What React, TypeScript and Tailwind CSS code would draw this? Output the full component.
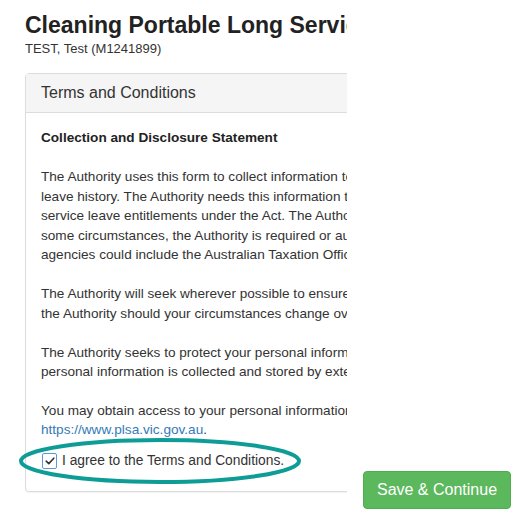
const paragraphs: string[][] = [
  [
    'The Authority uses this form to collect information to determine your long',
    'leave history. The Authority needs this information to calculate your long',
    'service leave entitlements under the Act. The Authority may disclose this information. In',
    'some circumstances, the Authority is required or authorised by law to disclose',
    'agencies could include the Australian Taxation Office.',
  ],
  [
    'The Authority will seek wherever possible to ensure that your information is up to date. Please contact',
    'the Authority should your circumstances change over time.',
  ],
  [
    'The Authority seeks to protect your personal information from misuse. Some',
    'personal information is collected and stored by external service providers.',
  ],
];

const CheckIcon = () => (
  <svg width="10" height="8" viewBox="0 0 10 8" fill="none">
    <path d="M1.2 4.2 L3.8 6.6 L8.8 1.2" stroke="#333" strokeWidth="1.6" strokeLinecap="round" strokeLinejoin="round" />
  </svg>
);

export default function App() {
  return (
    <div className="relative h-[526px] w-[527px] overflow-hidden bg-white font-['Liberation_Sans',Arial,sans-serif] text-[#333]">
      <div className="flex h-full">
        {/* Clipped page area */}
        <div className="h-full w-[347px] shrink-0 overflow-hidden pl-[25px] pt-[13px]">
          <div className="w-[700px]">
            <h1 className="text-[23px] font-bold leading-[25px] text-[#222]">
              Cleaning Portable Long Service Leave Registration
            </h1>
            <div className="mt-px text-[13px] leading-[20px] text-[#333]">TEST, Test (M1241899)</div>

            <div className="mt-[14px] rounded-[4px] border border-[#ddd] bg-white shadow-[0_1px_1px_rgba(0,0,0,0.05)]">
              <div className="flex h-[39px] items-center border-b border-[#ddd] bg-[#f5f5f5] px-[15px] text-[16px] text-[#333]">
                Terms and Conditions
              </div>
              <div className="px-[15px] pb-[21px] pt-[15px] text-[13.6px] leading-[19.45px]">
                <div className="mb-[20px] font-bold text-[#222]">Collection and Disclosure Statement</div>
                {paragraphs.map((lines, i) => (
                  <div key={i} className="mb-[19.45px]">
                    {lines.map((line, j) => (
                      <div key={j} className="whitespace-nowrap">
                        {line}
                      </div>
                    ))}
                  </div>
                ))}
                <div>
                  <div className="whitespace-nowrap">
                    You may obtain access to your personal information by contacting the Authority or visiting
                  </div>
                  <div className="whitespace-nowrap">
                    <span className="text-[#337ab7]">https://www.plsa.vic.gov.au</span>.
                  </div>
                </div>
                <div className="mt-[12px] flex h-[18px] items-center">
                  <span className="ml-px flex h-[16px] w-[15px] items-center justify-center rounded-[2px] border-[1.5px] border-[#5b9bd5] bg-white">
                    <CheckIcon />
                  </span>
                  <span className="ml-[5px] text-[13.8px] leading-[18px]">I agree to the Terms and Conditions.</span>
                </div>
              </div>
            </div>
          </div>
        </div>

        {/* Action */}
        <div className="flex flex-col justify-end pb-[17px] pl-[16px]">
          <button className="h-[38px] w-[148px] rounded-[4px] border border-[#4cae4c] bg-[#5cb85c] text-[16px] text-white">
            Save &amp; Continue
          </button>
        </div>
      </div>

      {/* Highlight annotation */}
      <svg className="pointer-events-none absolute left-0 top-0" width="527" height="526">
        <ellipse cx="160" cy="461" rx="139" ry="21" fill="none" stroke="#0e9c97" strokeWidth="4" />
      </svg>
    </div>
  );
}
